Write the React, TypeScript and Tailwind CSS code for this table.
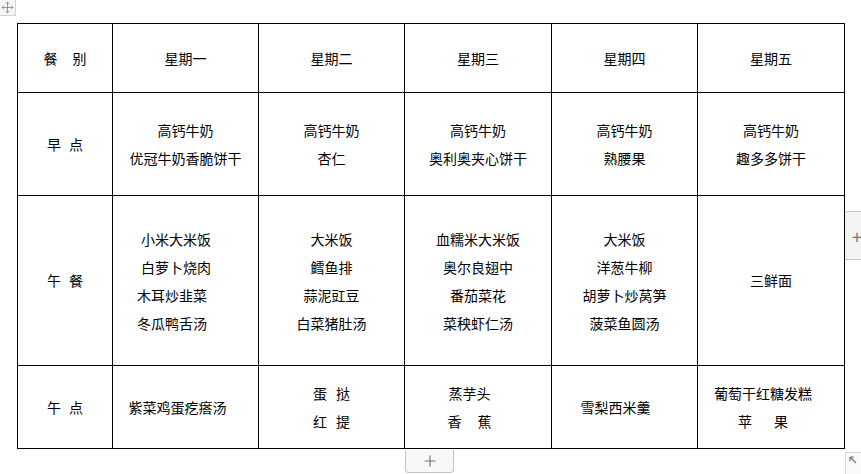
import { Move } from "lucide-react"

const font = { fontFamily: '"Noto Sans CJK SC", "Noto Sans", sans-serif' }

const days = ["星期一", "星期二", "星期三", "星期四", "星期五"]

function Lines({ items }: { items: React.ReactNode[] }) {
  return (
    <div className="flex flex-col items-center">
      {items.map((t, i) => (
        <div key={i} className="leading-[28px] whitespace-nowrap">
          {t}
        </div>
      ))}
    </div>
  )
}

function Spread({ a, b, gap }: { a: string; b: string; gap: string }) {
  return (
    <span className={`inline-flex ${gap}`}>
      <span>{a}</span>
      <span>{b}</span>
    </span>
  )
}

export default function App() {
  const cell = "border border-black text-center align-middle p-0"
  return (
    <div className="relative w-[861px] h-[474px] bg-white text-[14px] text-black overflow-hidden" style={font}>
      {/* table move handle */}
      <div className="absolute left-0 top-0 w-[16px] h-[16px] flex items-center justify-center border-r border-b border-[#d4d4d4] bg-[#f7f7f7]">
        <Move className="w-[13px] h-[13px] text-[#8a8a8a]" strokeWidth={1.6} />
      </div>

      <div className="pt-[23px] pl-[17px]">
        <table className="border-collapse table-fixed w-[827px]">
          <colgroup>
            <col className="w-[95px]" />
            <col className="w-[146px]" />
            <col className="w-[146px]" />
            <col className="w-[147px]" />
            <col className="w-[146px]" />
            <col className="w-[147px]" />
          </colgroup>
          <tbody>
            <tr className="h-[69px]">
              <td className={cell}>
                <Spread a="餐" b="别" gap="gap-[15px]" />
              </td>
              {days.map((d) => (
                <td key={d} className={cell}>
                  {d}
                </td>
              ))}
            </tr>

            <tr className="h-[103px]">
              <td className={cell}>
                <Spread a="早" b="点" gap="gap-[8px]" />
              </td>
              <td className={cell}>
                <Lines items={["高钙牛奶", "优冠牛奶香脆饼干"]} />
              </td>
              <td className={cell}>
                <Lines items={["高钙牛奶", "杏仁"]} />
              </td>
              <td className={cell}>
                <Lines items={["高钙牛奶", "奥利奥夹心饼干"]} />
              </td>
              <td className={cell}>
                <Lines items={["高钙牛奶", "熟腰果"]} />
              </td>
              <td className={cell}>
                <Lines items={["高钙牛奶", "趣多多饼干"]} />
              </td>
            </tr>

            <tr className="h-[170px]">
              <td className={cell}>
                <Spread a="午" b="餐" gap="gap-[8px]" />
              </td>
              <td className={`${cell} text-left`}>
                <div className="leading-[28px]">
                  <div className="pl-[28px]">小米大米饭</div>
                  <div className="pl-[28px]">白萝卜烧肉</div>
                  <div className="pl-[24px]">木耳炒韭菜</div>
                  <div className="pl-[24px]">冬瓜鸭舌汤</div>
                </div>
              </td>
              <td className={cell}>
                <Lines items={["大米饭", "鳕鱼排", "蒜泥豇豆", "白菜猪肚汤"]} />
              </td>
              <td className={cell}>
                <Lines items={["血糯米大米饭", "奥尔良翅中", "番茄菜花", "菜秧虾仁汤"]} />
              </td>
              <td className={cell}>
                <Lines items={["大米饭", "洋葱牛柳", "胡萝卜炒莴笋", "菠菜鱼圆汤"]} />
              </td>
              <td className={cell}>三鲜面</td>
            </tr>

            <tr className="h-[83px]">
              <td className={cell}>
                <Spread a="午" b="点" gap="gap-[8px]" />
              </td>
              <td className={`${cell} pr-[16px]`}>紫菜鸡蛋疙瘩汤</td>
              <td className={cell}>
                <Lines
                  items={[
                    <Spread key="a" a="蛋" b="挞" gap="gap-[9px]" />,
                    <Spread key="b" a="红" b="提" gap="gap-[9px]" />,
                  ]}
                />
              </td>
              <td className={`${cell} pr-[17px]`}>
                <Lines items={["蒸芋头", <Spread key="c" a="香" b="蕉" gap="gap-[16px]" />]} />
              </td>
              <td className={`${cell} pr-[18px]`}>雪梨西米羹</td>
              <td className={`${cell} pr-[16px]`}>
                <Lines items={["葡萄干红糖发糕", <Spread key="d" a="苹" b="果" gap="gap-[22px]" />]} />
              </td>
            </tr>
          </tbody>
        </table>
      </div>

      {/* add column tab */}
      <div className="absolute left-[845px] top-[211px] w-[24px] h-[49px] flex items-center justify-center bg-[#f3f3f3] border-y border-[#c4c4c4] rounded-l-[2px]">
        <span className="text-[#777] text-[18px] leading-none -translate-x-[0px]">+</span>
      </div>

      {/* add row tab */}
      <div className="absolute left-[405px] top-[450px] w-[49px] h-[23px] flex items-center justify-center bg-[#f7f7f7] border border-t-0 border-[#c4c4c4] rounded-b-[4px]">
        <svg width="12" height="12" viewBox="0 0 12 12">
          <path d="M6 0.5V11.5M0.5 6H11.5" stroke="#777" strokeWidth="1.2" />
        </svg>
      </div>

      {/* resize corner */}
      <div className="absolute left-[845px] top-[452px] w-[20px] h-[24px] border-l border-t border-[#d8d8d8] bg-[#fafafa]">
        <svg className="absolute left-[3px] top-[3px]" width="9" height="9" viewBox="0 0 9 9">
          <path d="M1 1H5M1 1V5M1 1L7 7" stroke="#777" strokeWidth="1.2" fill="none" />
        </svg>
      </div>
    </div>
  )
}
